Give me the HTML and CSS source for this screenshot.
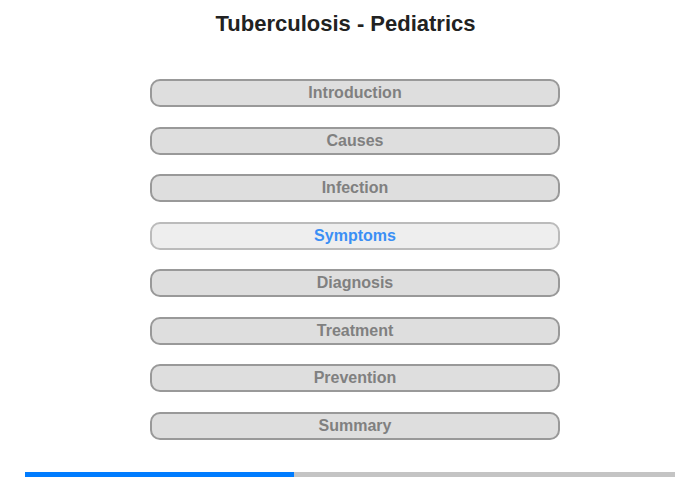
FILE: index.html
```html
<!DOCTYPE html>
<html lang="en">

<head>
    <meta charset="UTF-8">
    <meta name="viewport" content="width=device-width, initial-scale=1.0">
    <title>Tuberculosis - Pediatrics</title>
    <link rel="stylesheet" href="styles.css">
</head>

<body>
    <div class="main-container">
        <h1>Tuberculosis - Pediatrics</h1>

        <div class="menu">
            <button class="menu-button">Introduction</button>
            <button class="menu-button">Causes</button>
            <button class="menu-button">Infection</button>
            <button class="menu-button active">Symptoms</button>
            <button class="menu-button">Diagnosis</button>
            <button class="menu-button">Treatment</button>
            <button class="menu-button">Prevention</button>
            <button class="menu-button">Summary</button>
        </div>

        <div class="progress">
            <div class="progress-fill" style="width: 41.4%"></div>
        </div>
    </div>
</body>

</html>
```

FILE: styles.css
```css
body {
    font-family: "Liberation Sans", Arial, sans-serif;
    margin: 0;
    padding: 0;
    background-color: #fff;
}

.main-container {
    width: 700px;
    height: 480px;
    padding-top: 11px;
    box-sizing: border-box;
}

h1 {
    font-size: 22px;
    font-weight: bold;
    text-align: center;
    color: #222;
    margin: 0 0 0 -9px;
    line-height: 25px;
}

.menu {
    display: flex;
    flex-direction: column;
    align-items: center;
    gap: 19.5px;
    margin: 43px 0 0 10px;
}

.menu-button {
    width: 410px;
    height: 28px;
    background-color: #dedede;
    border: 2px solid #999;
    border-radius: 10px;
    color: #808080;
    font-family: "Liberation Sans", Arial, sans-serif;
    font-size: 16px;
    font-weight: bold;
    padding: 0;
    cursor: pointer;
    text-align: center;
}

.menu-button.active {
    background-color: #eee;
    border-color: #bbb;
    color: #3b8ff5;
}

.progress {
    margin: 32px 0 0 25px;
    width: 650px;
    height: 5px;
    background-color: #c4c4c4;
}

.progress-fill {
    height: 100%;
    background-color: #007cff;
}
```
